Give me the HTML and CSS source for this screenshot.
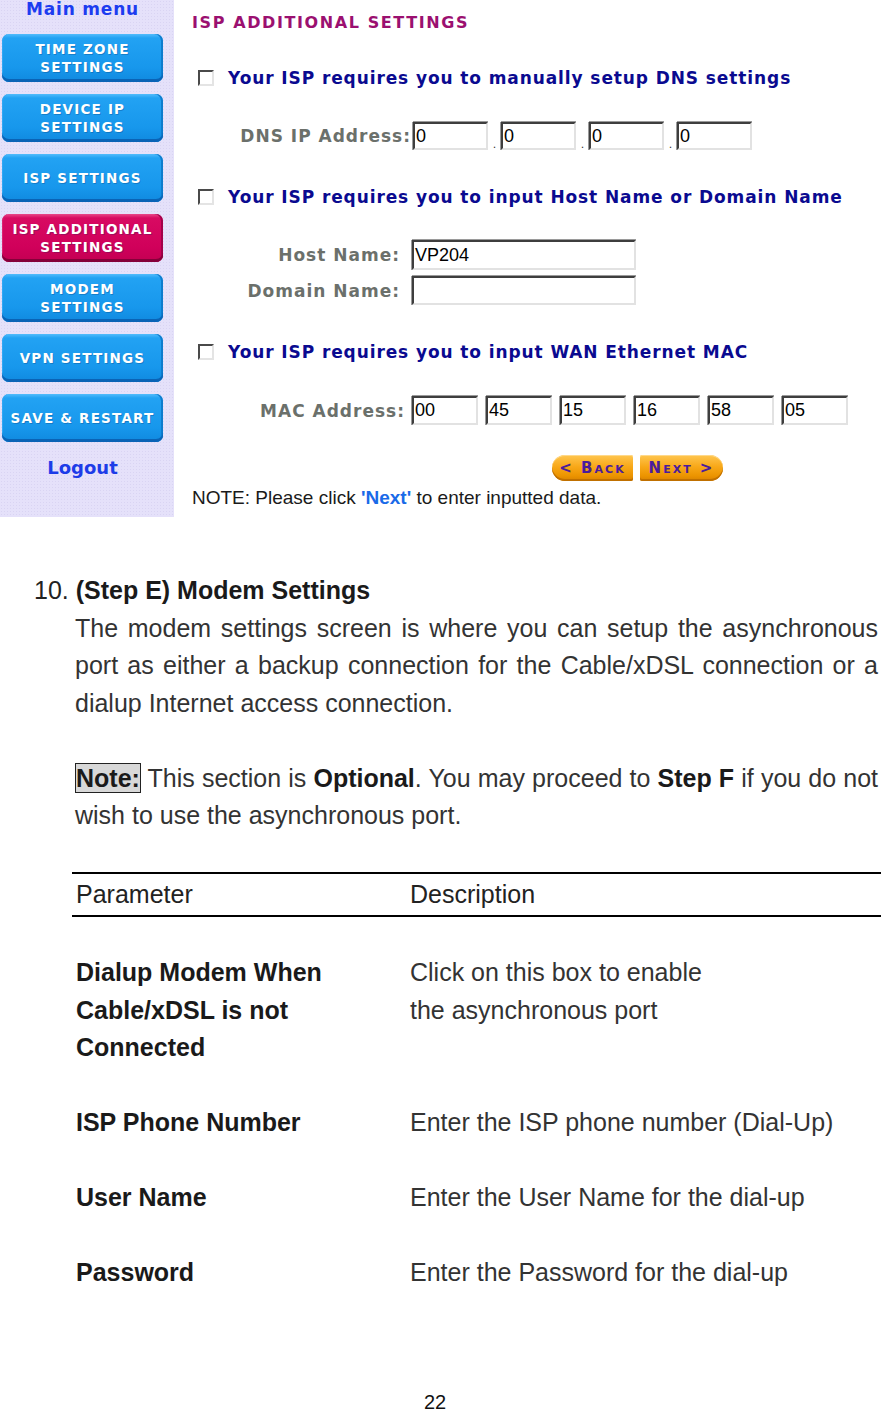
FILE: index.html
```html
<!DOCTYPE html>
<html lang="en">
<head>
<meta charset="utf-8">
<title>Modem Settings</title>
<link rel="stylesheet" href="styles.css">
</head>
<body>
<div class="shot">
  <aside class="side">
    <div class="menu-title">Main menu</div>
    <nav class="menu">
      <a class="mbtn">TIME ZONE<br>SETTINGS</a>
      <a class="mbtn">DEVICE IP<br>SETTINGS</a>
      <a class="mbtn">ISP SETTINGS</a>
      <a class="mbtn active">ISP ADDITIONAL<br>SETTINGS</a>
      <a class="mbtn">MODEM<br>SETTINGS</a>
      <a class="mbtn">VPN SETTINGS</a>
      <a class="mbtn">SAVE &amp; RESTART</a>
    </nav>
    <a class="logout">Logout</a>
  </aside>
  <section class="form">
    <h2 class="ftitle">ISP ADDITIONAL SETTINGS</h2>

    <div class="cbrow cb-first"><span class="cb"></span><span class="cbtext">Your ISP requires you to manually setup DNS settings</span></div>
    <div class="frow dns">
      <span class="flabel">DNS IP Address:</span>
      <span class="inp ip">0</span><span class="dot">.</span>
      <span class="inp ip">0</span><span class="dot">.</span>
      <span class="inp ip">0</span><span class="dot">.</span>
      <span class="inp ip">0</span>
    </div>

    <div class="cbrow cb-next"><span class="cb"></span><span class="cbtext">Your ISP requires you to input Host Name or Domain Name</span></div>
    <div class="frow host">
      <span class="flabel">Host Name:</span>
      <span class="inp wide">VP204</span>
    </div>
    <div class="frow domain">
      <span class="flabel">Domain Name:</span>
      <span class="inp wide"></span>
    </div>

    <div class="cbrow cb-next"><span class="cb"></span><span class="cbtext">Your ISP requires you to input WAN Ethernet MAC</span></div>
    <div class="frow mac">
      <span class="flabel">MAC Address:</span>
      <span class="inp m">00</span>
      <span class="inp m">45</span>
      <span class="inp m">15</span>
      <span class="inp m">16</span>
      <span class="inp m">58</span>
      <span class="inp m">05</span>
    </div>

    <div class="navbtns">
      <span class="obtn back">&lt; Back</span>
      <span class="obtn next">Next &gt;</span>
    </div>
    <div class="fnote">NOTE: Please click <b>'Next'</b> to enter inputted data.</div>
  </section>
</div>

<main class="doc">
  <h3 class="step">10. <b>(Step E) Modem Settings</b></h3>
  <p>The modem settings screen is where you can setup the asynchronous port as either a backup connection for the Cable/xDSL connection or a dialup Internet access connection.</p>
  <p class="spaced"><span class="tag">Note:</span> This section is <b>Optional</b>. You may proceed to <b>Step F</b> if you do not <span>wish to use the asynchronous port.</span></p>

  <div class="ptable">
    <div class="thead">
      <div class="cell">Parameter</div>
      <div class="cell">Description</div>
    </div>
    <div class="trow">
      <div class="cell param">Dialup Modem When<br>Cable/xDSL is not<br>Connected</div>
      <div class="cell">Click on this box to enable<br>the asynchronous port</div>
    </div>
    <div class="trow">
      <div class="cell param">ISP Phone Number</div>
      <div class="cell">Enter the ISP phone number (Dial-Up)</div>
    </div>
    <div class="trow">
      <div class="cell param">User Name</div>
      <div class="cell">Enter the User Name for the dial-up</div>
    </div>
    <div class="trow">
      <div class="cell param">Password</div>
      <div class="cell">Enter the Password for the dial-up</div>
    </div>
  </div>
</main>
<footer class="pageno">22</footer>
</body>
</html>
```

FILE: styles.css
```css
* { box-sizing: border-box; }

body {
  margin: 0;
  width: 881px;
  background: #ffffff;
  font-family: "Liberation Sans", Arial, sans-serif;
  color: #333333;
}

/* ---------- embedded router screenshot ---------- */
.shot {
  display: flex;
  height: 517px;
}

.side {
  width: 174px;
  padding-right: 9px;
  background-color: #e5e1fa;
  background-image: radial-gradient(#d9d4f3 0.7px, transparent 0.9px);
  background-size: 3px 3px;
  font-family: "DejaVu Sans", Verdana, sans-serif;
  display: flex;
  flex-direction: column;
  align-items: center;
}

.menu-title {
  font-size: 17px;
  line-height: 18px;
  font-weight: bold;
  letter-spacing: 0.8px;
  color: #1c3cf0;
}

.menu {
  display: flex;
  flex-direction: column;
  gap: 12px;
  margin-top: 16px;
}

.mbtn {
  width: 161px;
  height: 48px;
  display: flex;
  align-items: center;
  justify-content: center;
  text-align: center;
  color: #ffffff;
  font-size: 13.5px;
  line-height: 18px;
  font-weight: bold;
  letter-spacing: 1.2px;
  border-radius: 7px;
  background: linear-gradient(to bottom, #52bcfc 0, #22a2f3 4px, #1797ec 70%, #1089df 100%);
  box-shadow: inset 0 -3px 0 #0a63b6, inset -2px 0 0 #0d7ccd, inset 1px 0 0 #2ea8f5;
  text-shadow: 1px 1px 0 rgba(0, 40, 90, 0.25);
}

.mbtn.active {
  background: linear-gradient(to bottom, #e8488a 0, #d80a62 4px, #d0005a 70%, #c20052 100%);
  box-shadow: inset 0 -3px 0 #84003a, inset -2px 0 0 #a3004a, inset 1px 0 0 #dc2270;
}

.logout {
  margin-top: 15px;
  font-size: 18px;
  line-height: 22px;
  font-weight: bold;
  color: #1c3ce8;
}

.form {
  flex: 1;
  padding-left: 18px;
  font-family: "DejaVu Sans", Verdana, sans-serif;
}

.ftitle {
  margin: 0;
  height: 46px;
  line-height: 46px;
  font-size: 16px;
  font-weight: bold;
  letter-spacing: 1.6px;
  color: #9b1070;
}

.cbrow {
  display: flex;
  align-items: center;
  height: 32px;
}
.cb-first { margin-top: 16px; }
.cb-next { margin-top: 31px; }

.cb {
  width: 16px;
  height: 16px;
  margin-left: 6px;
  margin-right: 14px;
  background: #ffffff;
  border-style: solid;
  border-width: 2px;
  border-color: #4a4a4a #e4e4e4 #e4e4e4 #4a4a4a;
}

.cbtext {
  font-size: 17px;
  font-weight: bold;
  letter-spacing: 0.9px;
  color: #0a0a90;
}

.frow {
  display: flex;
  align-items: center;
}

.flabel {
  font-size: 17px;
  font-weight: bold;
  letter-spacing: 1px;
  color: #6b706b;
  text-align: right;
  white-space: nowrap;
}

.inp {
  height: 100%;
  display: flex;
  align-items: center;
  padding-left: 1px;
  background: #ffffff;
  border-style: solid;
  border-width: 2px;
  border-color: #3e3e3e #e2e2e2 #e2e2e2 #3e3e3e;
  box-shadow: 0 -1px 0 #9a9a9a, -1px 0 0 #9a9a9a;
  font-family: "Liberation Sans", Arial, sans-serif;
  font-size: 18px;
  color: #000000;
}

.dns { margin-top: 28px; height: 28px; }
.dns .flabel { width: 219px; margin-right: 2px; }
.ip { width: 75px; }
.dot {
  width: 13px;
  align-self: flex-end;
  text-align: center;
  font-size: 11px;
  line-height: 10px;
  color: #333;
}

.host { margin-top: 27px; height: 30px; }
.domain { margin-top: 6px; height: 29px; }
.host .flabel, .domain .flabel { width: 208px; margin-right: 12px; }
.wide { width: 224px; }

.mac { margin-top: 28px; height: 29px; gap: 8px; }
.mac .flabel { width: 213px; margin-right: -1px; }
.m { width: 66px; }

.navbtns {
  display: flex;
  gap: 7px;
  margin-top: 30px;
  padding-left: 360px;
  height: 26px;
}

.obtn {
  display: flex;
  align-items: center;
  justify-content: center;
  height: 26px;
  font-size: 15px;
  font-weight: bold;
  font-variant: small-caps;
  letter-spacing: 2px;
  color: #4a1c9c;
  background: linear-gradient(to bottom, #ffc650 0, #f8a818 45%, #ec9400 80%, #d88200 100%);
  box-shadow: inset 0 -2px 0 #c07000, inset 0 1px 0 #ffd98a;
}
.back { width: 81px; border-radius: 13px 2px 2px 13px; }
.next { width: 83px; border-radius: 2px 13px 13px 2px; }

.fnote {
  margin-top: 7px;
  font-family: "Liberation Sans", Arial, sans-serif;
  font-size: 19px;
  line-height: 20px;
  color: #1a1a1a;
}
.fnote b { color: #1a6ae8; }

/* ---------- document text ---------- */
.doc {
  padding: 55px 3px 0 75px;
  font-size: 25px;
  line-height: 37.5px;
  color: #333333;
}

.step {
  margin: 0;
  font-size: 25px;
  font-weight: normal;
  text-indent: -41px;
  color: #222222;
}
.step b { color: #111111; }

.doc p {
  margin: 0;
  text-align: justify;
}
.doc p.spaced { margin-top: 37.5px; }
.doc b { color: #1a1a1a; }

.tag {
  display: inline-block;
  line-height: 28px;
  background: #d8d8d8;
  border: 1px solid #222222;
  font-weight: bold;
  color: #1a1a1a;
}

.ptable {
  margin: 37px -3px 0 -3px;
}

.thead,
.trow {
  display: grid;
  grid-template-columns: 338px 1fr;
}

.thead {
  border-top: 2px solid #000000;
  border-bottom: 2px solid #000000;
  line-height: 41px;
  color: #222222;
}

.trow {
  padding-top: 37.5px;
}

.cell { padding-left: 4px; }
.thead .cell:last-child,
.trow .cell:last-child { padding-left: 0; }

.param {
  font-weight: bold;
  color: #1a1a1a;
}

.pageno {
  margin-top: 99px;
  padding-right: 11px;
  text-align: center;
  font-size: 20px;
  line-height: 23px;
  color: #111111;
}
```
